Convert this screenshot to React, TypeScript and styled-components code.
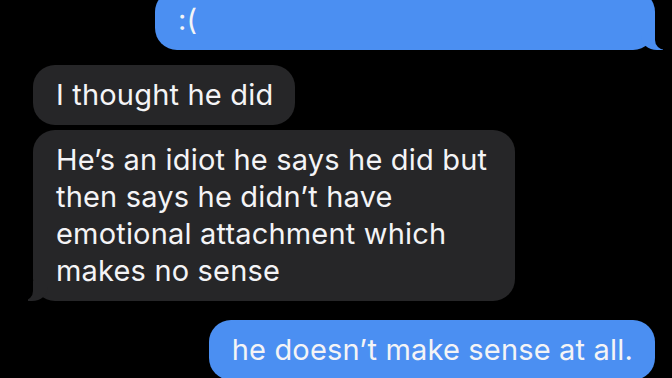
import React from "react";
import styled, { createGlobalStyle, css } from "styled-components";

const GlobalStyle = createGlobalStyle`
  html, body {
    margin: 0;
    padding: 0;
    background: #000;
    overflow: hidden;
  }
  body {
    font-family: Inter, "Noto Sans", "Liberation Sans", sans-serif;
  }
`;

const BLUE = "#4b8ff2";
const GRAY = "#262628";

const Screen = styled.div`
  width: 672px;
  height: 378px;
  background: #000;
  overflow: hidden;
  display: flex;
  flex-direction: column;
  padding: 0 17px 0 33px;
  box-sizing: border-box;
`;

type Side = "me" | "them";

const Bubble = styled.div<{ $side: Side; $tail?: boolean; $gap?: number; $width?: number }>`
  position: relative;
  box-sizing: border-box;
  margin-top: ${(p) => p.$gap ?? 0}px;
  align-self: ${(p) => (p.$side === "me" ? "flex-end" : "flex-start")};
  width: ${(p) => (p.$width ? `${p.$width}px` : "fit-content")};
  max-width: ${(p) => (p.$width ? "none" : "482px")};
  min-height: 60px;
  padding: 11px 22px 12px 23px;
  border-radius: 22px;
  background: ${(p) => (p.$side === "me" ? BLUE : GRAY)};
  color: #f4f4f6;
  font-size: 29px;
  line-height: 37px;
  letter-spacing: 0.18px;
  flex-shrink: 0;

  ${(p) =>
    p.$tail &&
    p.$side === "me" &&
    css`
      &::before {
        content: "";
        position: absolute;
        bottom: 0;
        right: -8px;
        width: 22px;
        height: 22px;
        background: ${BLUE};
        border-bottom-left-radius: 16px 14px;
      }
      &::after {
        content: "";
        position: absolute;
        bottom: 0;
        right: -26px;
        width: 26px;
        height: 22px;
        background: #000;
        border-bottom-left-radius: 10px;
      }
    `}

  ${(p) =>
    p.$tail &&
    p.$side === "them" &&
    css`
      &::before {
        content: "";
        position: absolute;
        bottom: 0;
        left: -5px;
        width: 20px;
        height: 20px;
        background: ${GRAY};
        border-bottom-right-radius: 16px 14px;
      }
      &::after {
        content: "";
        position: absolute;
        bottom: 0;
        left: -26px;
        width: 26px;
        height: 20px;
        background: #000;
        border-bottom-right-radius: 10px;
      }
    `}
`;

export default function App() {
  return (
    <>
      <GlobalStyle />
      <Screen>
        <Bubble $side="me" $tail $gap={-10} $width={500}>
          :(
        </Bubble>
        <Bubble $side="them" $gap={15}>
          I thought he did
        </Bubble>
        <Bubble $side="them" $tail $gap={5}>
          He’s an idiot he says he did but then says he didn’t have emotional attachment which makes no sense
        </Bubble>
        <Bubble $side="me" $gap={19}>
          he doesn’t make sense at all.
        </Bubble>
      </Screen>
    </>
  );
}
